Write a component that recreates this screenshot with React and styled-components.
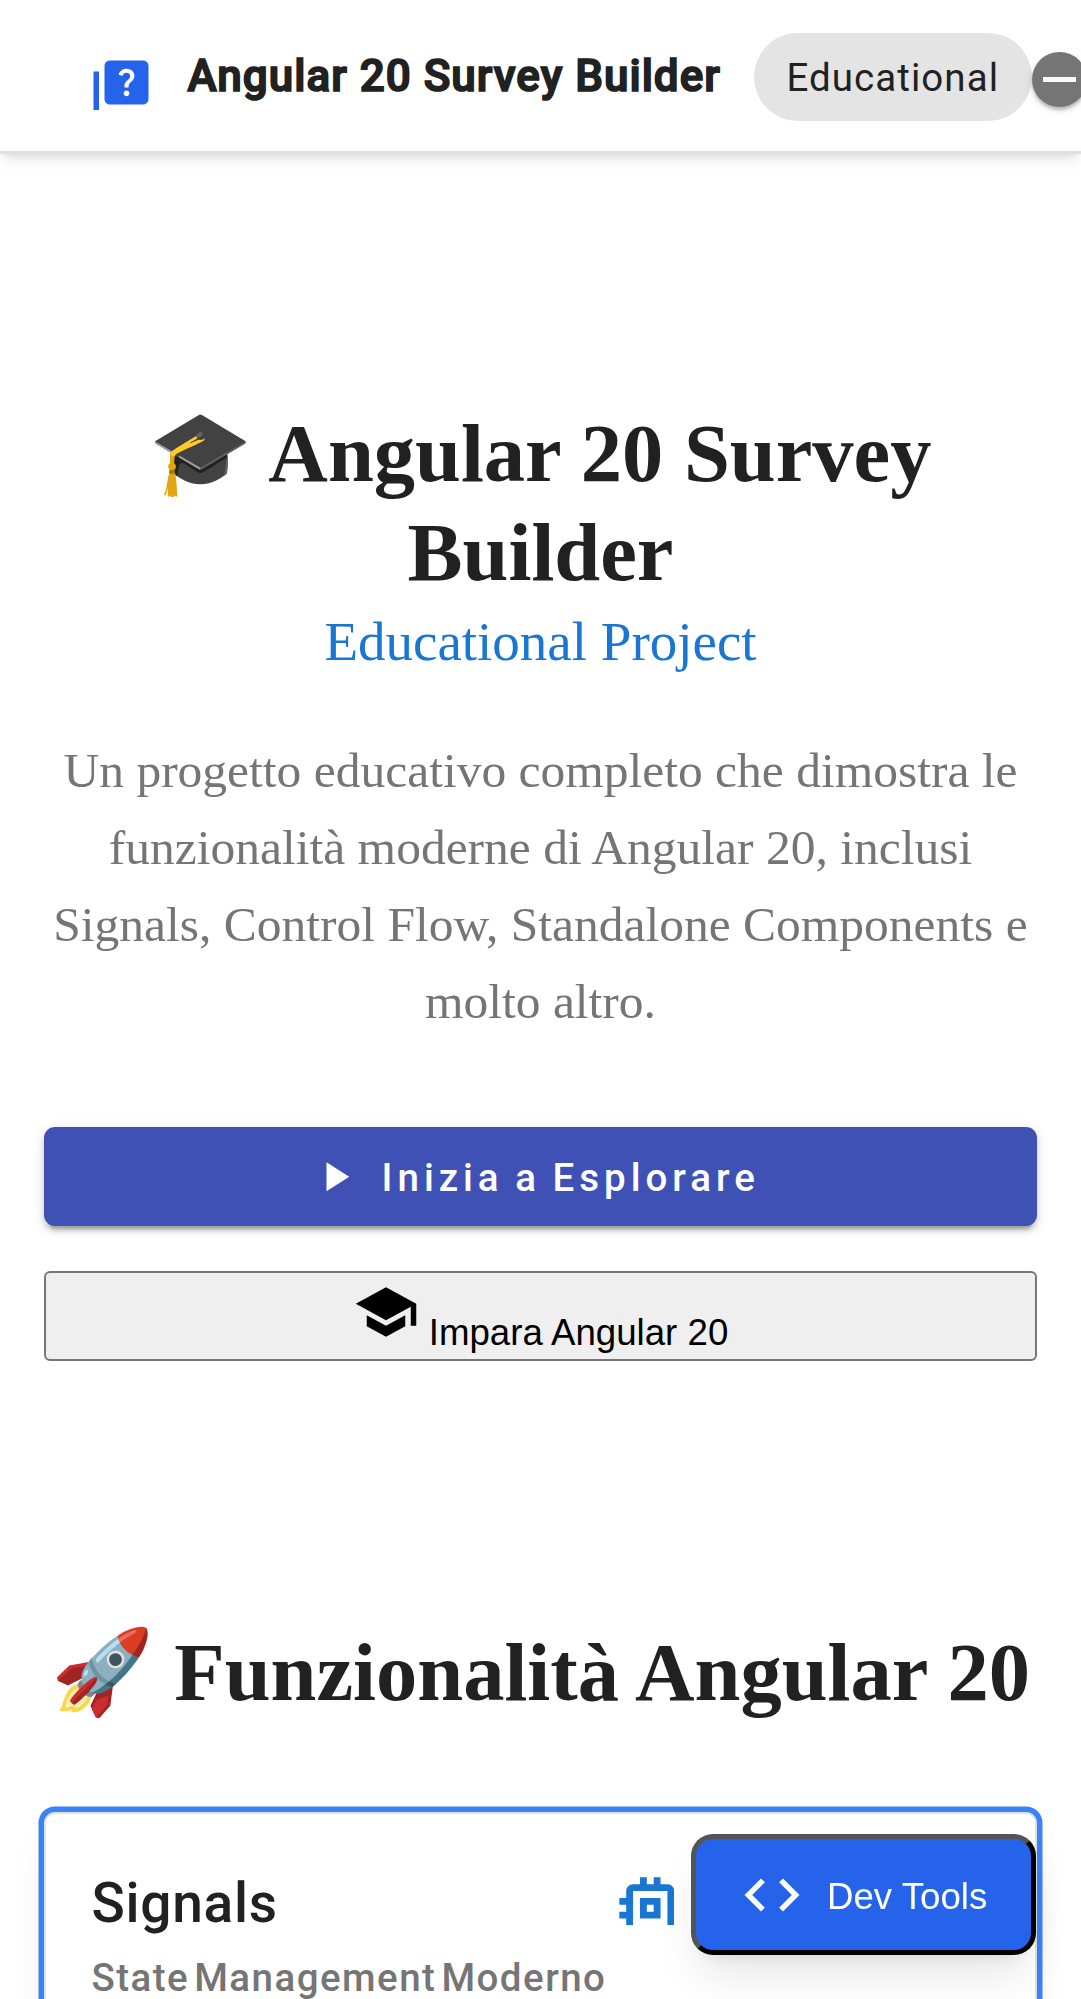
import React from "react";
import styled, { createGlobalStyle } from "styled-components";

const GlobalStyle = createGlobalStyle`
  *, *::before, *::after { box-sizing: border-box; }
  html, body { margin: 0; padding: 0; background: #fff; overflow: hidden; }
  button { margin: 0; cursor: pointer; }
`;

const serif = `"Liberation Serif", "Noto Color Emoji", serif`;
const roboto = `Roboto, sans-serif`;
const sans = `"Liberation Sans", sans-serif`;

const Page = styled.div`
  height: 1999px;
  overflow: hidden;
  color: #212121;
  font-family: ${serif};
`;

const Toolbar = styled.header`
  display: flex;
  align-items: center;
  height: 154px;
  padding-left: 88px;
  background: #fff;
  border-bottom: 3px solid #e0e0e0;
  box-shadow: 0 8px 14px -3px rgba(0, 0, 0, 0.1), 0 4px 9px -5px rgba(0, 0, 0, 0.1);
`;

const Icon = styled.svg`
  display: block;
  flex: none;
  width: ${(p) => p.$size}px;
  height: ${(p) => p.$size}px;
  fill: currentColor;
`;

const LogoBox = styled.span`
  flex: none;
  width: 66px;
  height: 55px;
  margin-top: 13.5px;
  overflow: hidden;
  color: #2563eb;
`;

const Brand = styled.span`
  flex: none;
  margin: 1px 0 0 33px;
  padding-left: 0.5px;
  width: 566.5px;
  font: 500 44px/88px ${roboto};
  letter-spacing: 1.01px;
  -webkit-text-stroke: 1.7px currentColor;
  white-space: nowrap;
`;

const Chip = styled.span`
  flex: none;
  width: 278px;
  height: 88px;
  margin-top: 3px;
  padding: 0 33px;
  border-radius: 44px;
  background: #e4e4e4;
  font: 400 38.5px/90px ${roboto};
  letter-spacing: 1.05px;
  white-space: nowrap;
`;

const ToggleThumb = styled.span`
  display: flex;
  flex: none;
  align-items: center;
  justify-content: center;
  width: 55px;
  height: 55px;
  margin-top: 8px;
  border-radius: 50%;
  background: #757575;
  box-shadow: 0 3px 3px rgba(0, 0, 0, 0.2), 0 3px 8px rgba(0, 0, 0, 0.12);

  &::before {
    content: "";
    width: 33px;
    height: 4.5px;
    background: #fafafa;
  }
`;

const Hero = styled.section`
  display: flex;
  flex-direction: column;
  padding: 250px 44px 0;
  text-align: center;
`;

const Title = styled.h1`
  margin: 0;
  font: 700 82.5px/99px ${serif};
`;

const Subtitle = styled.span`
  display: block;
  margin-top: 1px;
  color: #1976d2;
  font: 400 55px/77px ${serif};
`;

const Lead = styled.p`
  margin: 52px 0 0;
  color: #757575;
  font: 400 49.5px/77px ${serif};
`;

const Actions = styled.div`
  display: flex;
  flex-direction: column;
  gap: 44.2px;
  margin-top: 87.4px;
`;

const PrimaryButton = styled.button`
  display: flex;
  align-items: center;
  justify-content: center;
  gap: 22px;
  height: 99px;
  padding: 0 11px 0 0;
  border: 0;
  border-radius: 11px;
  background: #3f51b5;
  color: #fff;
  font: 500 38.5px/45px ${roboto};
  letter-spacing: 5px;
  word-spacing: -3px;
  box-shadow: 0 8px 3px -5px rgba(0, 0, 0, 0.2), 0 5px 5px rgba(0, 0, 0, 0.14),
    0 3px 14px rgba(0, 0, 0, 0.12);

  span { margin-top: 2px; }
`;

const NativeButton = styled.button`
  display: flex;
  align-items: flex-start;
  justify-content: center;
  gap: 10px;
  height: 90px;
  padding: 6px 16px 0;
  border: 2px solid #767676;
  border-radius: 6px;
  background: #efefef;
  color: #000;
  font: 400 36.67px/42px ${sans};

  span { margin-top: 33px; }
`;

const Features = styled.section`
  padding: 262px 44px 0;
`;

const Heading = styled.h2`
  margin: 0 0 90.4px;
  font: 700 82.5px/99px ${serif};
  text-align: center;
  white-space: nowrap;
`;

const Card = styled.article`
  height: 500px;
  padding: 53.4px 44px 0 45.5px;
  border: 2px solid #e0e0e0;
  border-radius: 11px;
  background: #fff;
  box-shadow: 0 0 0 5.5px #3b82f6, 0 27.5px 41.25px -8.25px rgba(0, 0, 0, 0.1),
    0 11px 16.5px -11px rgba(0, 0, 0, 0.1);
`;

const CardHead = styled.div`
  display: flex;
  width: 582px;
  height: 81px;
  justify-content: space-between;
`;

const CardTitle = styled.h3`
  margin: 0;
  font: 500 55px/72px ${roboto};
  letter-spacing: 0.75px;
`;

const MemoryBox = styled.span`
  width: 65px;
  height: 58px;
  overflow: hidden;
  color: #1976d2;
`;

const CardSubtitle = styled.p`
  margin: 0;
  color: #757575;
  font: 500 38.5px/60px ${roboto};
  letter-spacing: 1.47px;
  word-spacing: -6px;
`;

const DevTools = styled.button`
  position: fixed;
  right: 45px;
  bottom: 44px;
  display: flex;
  align-items: center;
  gap: 22px;
  width: 345px;
  height: 121px;
  padding: 0 43px;
  border: 5px outset #000;
  border-radius: 22px;
  background: #2563eb;
  color: #fff;
  font: 400 36.67px/42px ${sans};
  white-space: nowrap;
  box-shadow: 0 27.5px 41.25px -8.25px rgba(0, 0, 0, 0.1),
    0 11px 16.5px -11px rgba(0, 0, 0, 0.1);

  span { margin-top: 4px; }
`;

const paths = {
  quiz: "M4 6H2v14c0 1.1.9 2 2 2h14v-2H4V6zm16-4H8c-1.1 0-2 .9-2 2v12c0 1.1.9 2 2 2h12c1.1 0 2-.9 2-2V4c0-1.1-.9-2-2-2zm-5.99 13c-.59 0-1.05-.47-1.05-1.05 0-.59.47-1.04 1.05-1.04.59 0 1.04.45 1.04 1.04-.01.58-.45 1.05-1.04 1.05zm2.5-6.17c-.63.93-1.23 1.21-1.56 1.81-.13.24-.18.4-.18 1.18h-1.52c0-.41-.06-1.08.26-1.65.41-.73 1.18-1.16 1.63-1.8.48-.68.21-1.94-1.14-1.94-.88 0-1.32.67-1.5 1.23l-1.37-.57C11.51 5.96 12.52 5 13.99 5c1.23 0 2.08.56 2.51 1.26.37.6.58 1.73.01 2.57z",
  play: "M8 5v14l11-7z",
  school: "M5 13.18v4L12 21l7-3.82v-4L12 17l-7-3.82zM12 3L1 9l11 6 9-4.91V17h2V9L12 3z",
  memory: "M15 9H9v6h6V9zm-2 4h-2v-2h2v2zm8-2V9h-2V7c0-1.1-.9-2-2-2h-2V3h-2v2h-2V3H9v2H7c-1.1 0-2 .9-2 2v2H3v2h2v2H3v2h2v2c0 1.1.9 2 2 2h2v2h2v-2h2v2h2v-2h2c1.1 0 2-.9 2-2v-2h2v-2h-2v-2h2zm-4 6H7V7h10v10z",
  code: "M9.4 16.6L4.8 12l4.6-4.6L8 6l-6 6 6 6 1.4-1.4zm5.2 0l4.6-4.6-4.6-4.6L16 6l6 6-6 6-1.4-1.4z",
};

function Glyph({ name, size = 66 }) {
  return (
    <Icon $size={size} viewBox="0 0 24 24" aria-hidden="true">
      <path d={paths[name]} />
    </Icon>
  );
}

export default function App() {
  return (
    <Page>
      <GlobalStyle />
      <Toolbar>
        <LogoBox><Glyph name="quiz" /></LogoBox>
        <Brand>Angular 20 Survey Builder</Brand>
        <Chip>Educational</Chip>
        <ToggleThumb />
      </Toolbar>
      <Hero>
        <Title>
          🎓 Angular 20 Survey Builder
          <Subtitle>Educational Project</Subtitle>
        </Title>
        <Lead>
          Un progetto educativo completo che dimostra le funzionalità moderne di
          Angular 20, inclusi Signals, Control Flow, Standalone Components e
          molto altro.
        </Lead>
        <Actions>
          <PrimaryButton>
            <Glyph name="play" size={49.5} />
            <span>Inizia a Esplorare</span>
          </PrimaryButton>
          <NativeButton>
            <Glyph name="school" />
            <span>Impara Angular 20</span>
          </NativeButton>
        </Actions>
      </Hero>
      <Features>
        <Heading>🚀 Funzionalità Angular 20</Heading>
        <Card>
          <CardHead>
            <CardTitle>Signals</CardTitle>
            <MemoryBox><Glyph name="memory" size={82.5} /></MemoryBox>
          </CardHead>
          <CardSubtitle>State Management Moderno</CardSubtitle>
        </Card>
      </Features>
      <DevTools>
        <Glyph name="code" />
        <span>Dev Tools</span>
      </DevTools>
    </Page>
  );
}
